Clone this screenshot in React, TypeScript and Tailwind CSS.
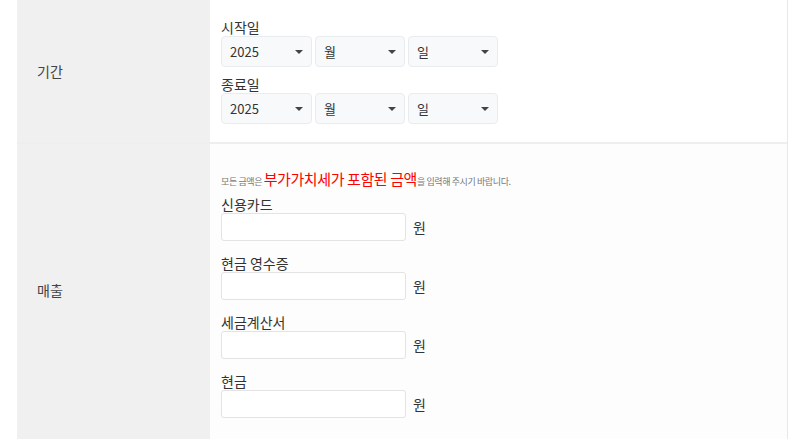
import React from "react"

const FONT = { fontFamily: '"Noto Sans CJK KR", "Noto Sans", sans-serif' }

function Caret() {
  return (
    <svg width="8" height="4" viewBox="0 0 8 4" className="shrink-0">
      <path d="M0 0 L8 0 L4 4 Z" fill="#444" />
    </svg>
  )
}

function FakeSelect({ value, width }: { value: string; width: string }) {
  return (
    <div
      className={`${width} h-[31px] flex items-center justify-between pl-[8px] pr-[8px] bg-[#f8f9fa] border border-[#e9ecef] rounded-[4px] text-[13px] text-[#333]`}
    >
      <span>{value}</span>
      <Caret />
    </div>
  )
}

function DateGroup({ label }: { label: string }) {
  return (
    <div className="flex flex-col">
      <div className="h-[18px] text-[14px] leading-[18px] text-[#333]">{label}</div>
      <div className="flex gap-[3px]">
        <FakeSelect value="2025" width="w-[91px]" />
        <FakeSelect value="월" width="w-[90px]" />
        <FakeSelect value="일" width="w-[90px]" />
      </div>
    </div>
  )
}

function AmountField({ label }: { label: string }) {
  return (
    <div className="flex flex-col">
      <div className="h-[17px] text-[14px] leading-[17px] text-[#333]">{label}</div>
      <div className="flex items-center gap-[7px]">
        <input
          type="text"
          className="w-[185px] h-[28px] bg-white border border-[#e3e3e3] rounded-[3px] outline-none"
        />
        <span className="text-[14px] leading-[17px] text-[#333]">원</span>
      </div>
    </div>
  )
}

export default function App() {
  return (
    <div className="w-[800px] h-[439px] bg-white overflow-hidden" style={FONT}>
      <div className="ml-[17px] w-[771px] border-r border-[#e8e8e8] h-full">
        {/* 기간 */}
        <div className="flex border-b-2 border-[#eeeeee]">
          <div className="w-[193px] bg-[#f0f0f0] flex items-center pl-[20px] text-[14px] text-[#444]">
            기간
          </div>
          <div className="flex-1 pl-[11px] pt-[18px] pb-[18px] flex flex-col gap-[8px]">
            <DateGroup label="시작일" />
            <DateGroup label="종료일" />
          </div>
        </div>

        {/* 매출 */}
        <div className="flex h-[300px]">
          <div className="w-[193px] bg-[#f0f0f0] flex items-center pl-[20px] pb-[8px] text-[14px] text-[#444]">
            매출
          </div>
          <div className="flex-1 bg-[#fdfdfd] pl-[11px] pt-[25px] flex flex-col">
            <div className="h-[20px] leading-[20px] text-[9px] text-[#777] tracking-[-0.4px] whitespace-nowrap">
              모든 금액은{" "}
              <span className="text-[15px] leading-[20px] text-[#ff0000] tracking-[-0.4px]">부가가치세가 포함된 금액</span>을
              입력해 주시기 바랍니다.
            </div>
            <div className="mt-[7px] flex flex-col gap-[14px]">
              <AmountField label="신용카드" />
              <AmountField label="현금 영수증" />
              <AmountField label="세금계산서" />
              <AmountField label="현금" />
            </div>
          </div>
        </div>
      </div>
    </div>
  )
}
